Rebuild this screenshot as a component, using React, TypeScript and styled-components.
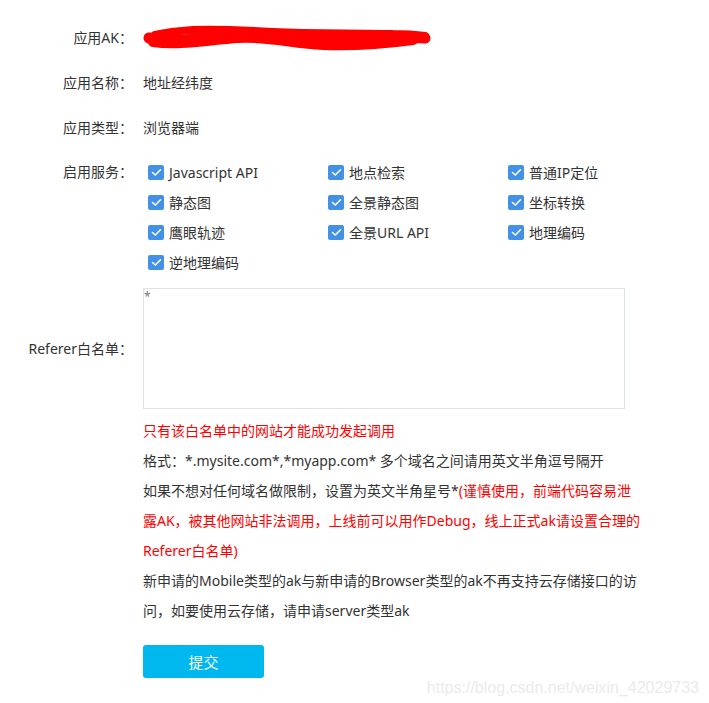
import React from "react";
import styled, { createGlobalStyle } from "styled-components";

const GlobalStyle = createGlobalStyle`
  html, body { margin: 0; padding: 0; background: #fff; }
  body {
    font-family: "Noto Sans", "Noto Sans CJK SC", sans-serif;
    font-size: 14px;
    color: #333;
  }
`;

const Page = styled.div`
  position: relative;
  width: 709px;
  height: 703px;
  overflow: hidden;
  background: #fff;
`;

const Form = styled.form`
  display: flex;
  flex-direction: column;
  padding-top: 15px;
`;

const Row = styled.div<{ $h?: number; $align?: string; $mt?: number }>`
  display: grid;
  grid-template-columns: 133px 1fr;
  column-gap: 10px;
  align-items: ${(p) => p.$align || "center"};
  ${(p) => (p.$h ? `height: ${p.$h}px;` : "")}
  margin-top: ${(p) => p.$mt || 0}px;
`;

const Label = styled.div<{ $lh?: number }>`
  text-align: right;
  white-space: nowrap;
  line-height: ${(p) => p.$lh || 20}px;
`;

const Value = styled.div`
  line-height: 20px;
`;

const Hidden = styled.div`
  position: relative;
  height: 28px;
  width: 290px;
`;

const Services = styled.div`
  display: grid;
  grid-template-columns: repeat(3, 180px);
  grid-auto-rows: 30px;
  padding-left: 5px;
`;

const Check = styled.label`
  display: flex;
  align-items: center;
  gap: 5px;
  white-space: nowrap;
`;

const Box = styled.span`
  width: 16px;
  height: 15px;
  border-radius: 2px;
  background: #4391e7;
  display: inline-flex;
  align-items: center;
  justify-content: center;
`;

const TextArea = styled.textarea`
  width: 482px;
  height: 121px;
  box-sizing: border-box;
  border: 1px solid #dde2ea;
  border-radius: 0;
  padding: 0;
  margin: 0;
  resize: none;
  font-family: "Noto Sans", "Noto Sans CJK SC", sans-serif;
  font-size: 12px;
  color: #777;
  line-height: 16px;
  outline: none;
`;

const Notes = styled.div`
  margin-top: 7px;
  margin-left: 143px;
  width: 500px;
  line-height: 30px;
`;

const Red = styled.span`
  color: #ff0000;
`;

const Submit = styled.button`
  margin: 19px 0 0 143px;
  width: 121px;
  height: 33px;
  border: none;
  border-radius: 3px;
  background: #00b7ee;
  color: #fff;
  font-family: "Noto Sans CJK SC", sans-serif;
  font-size: 15px;
  cursor: pointer;
`;

const Watermark = styled.div`
  position: absolute;
  right: 10px;
  bottom: 6px;
  font-family: "Liberation Sans", Arial, sans-serif;
  font-size: 16px;
  color: #ebebeb;
  white-space: nowrap;
`;

const CheckMark = () => (
  <svg width="11" height="9" viewBox="0 0 11 9">
    <polyline points="1.5,4.5 4.3,7 9.5,1.8" fill="none" stroke="#fff" strokeWidth="1.6" strokeLinecap="round" strokeLinejoin="round" />
  </svg>
);

const Scribble = () => (
  <svg width="290" height="28" viewBox="0 0 290 28" style={{ position: "absolute", left: 0, top: 0 }}>
    <g fill="none" stroke="#ff0000" strokeLinecap="round" strokeLinejoin="round">
      <path d="M6,14 C20,16 40,18 60,14 C85,10 110,8 140,11 C170,14 200,18 225,17 C250,16 268,13 282,14" strokeWidth="11" />
      <path d="M10,18 C35,22 65,16 95,14 C125,12 150,20 180,21 C210,22 240,20 270,16" strokeWidth="10" />
      <path d="M12,11 C25,8 35,7 50,6 C70,5 95,6 130,8 C170,10 210,9 250,10 C265,10 275,11 282,12" strokeWidth="8" />
    </g>
  </svg>
);

const services = [
  "Javascript API", "地点检索", "普通IP定位",
  "静态图", "全景静态图", "坐标转换",
  "鹰眼轨迹", "全景URL API", "地理编码",
  "逆地理编码",
];

export default function App() {
  return (
    <Page>
      <GlobalStyle />
      <Form onSubmit={(e) => e.preventDefault()}>
        <Row $h={45}>
          <Label>应用AK：</Label>
          <Hidden>
            <Scribble />
          </Hidden>
        </Row>
        <Row $h={45}>
          <Label>应用名称：</Label>
          <Value>地址经纬度</Value>
        </Row>
        <Row $h={45}>
          <Label>应用类型：</Label>
          <Value>浏览器端</Value>
        </Row>
        <Row $align="start" $mt={7}>
          <Label $lh={30}>启用服务：</Label>
          <Services>
            {services.map((s) => (
              <Check key={s}>
                <Box>
                  <CheckMark />
                </Box>
                {s}
              </Check>
            ))}
          </Services>
        </Row>
        <Row $mt={11}>
          <Label>Referer白名单：</Label>
          <TextArea defaultValue="*" />
        </Row>
        <Notes>
          <Red>只有该白名单中的网站才能成功发起调用</Red>
          <br />
          格式：*.mysite.com*,*myapp.com* 多个域名之间请用英文半角逗号隔开
          <br />
          如果不想对任何域名做限制，设置为英文半角星号*
          <Red>(谨慎使用，前端代码容易泄露AK，被其他网站非法调用，上线前可以用作Debug，线上正式ak请设置合理的Referer白名单)</Red>
          <br />
          新申请的Mobile类型的ak与新申请的Browser类型的ak不再支持云存储接口的访问，如要使用云存储，请申请server类型ak
        </Notes>
        <Submit type="submit">提交</Submit>
      </Form>
      <Watermark>https://blog.csdn.net/weixin_42029733</Watermark>
    </Page>
  );
}
